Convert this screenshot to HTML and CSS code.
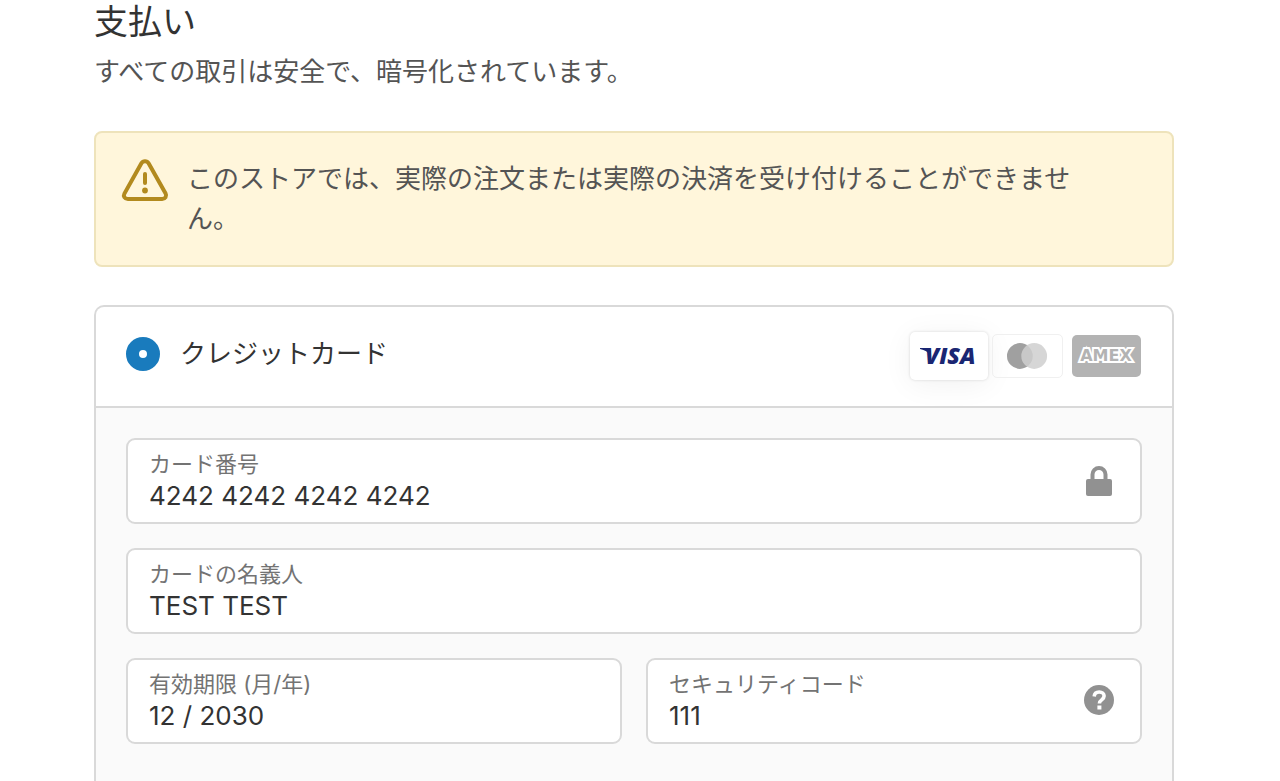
FILE: index.html
```html
<!DOCTYPE html>
<html lang="ja">
<head>
  <meta charset="UTF-8" />
  <meta name="viewport" content="width=device-width, initial-scale=1.0" />
  <title>支払い</title>
  <link rel="stylesheet" href="styles.css">
</head>
<body>
  <main class="payment">
    <h1>支払い</h1>
    <p class="subtitle">すべての取引は安全で、暗号化されています。</p>

    <div class="notice">
      <svg class="notice-icon" viewBox="0 0 48 48" aria-hidden="true">
        <path d="M20.4 6.2a4.2 4.2 0 0 1 7.2 0l17 30.4c1.400 2.600-.3 5.400-3.400 5.400H6.800c-3.100 0-4.800-2.800-3.400-5.400z" fill="none" stroke="#b28a1e" stroke-width="4" stroke-linejoin="round" />
        <path d="M24 17v9" stroke="#b28a1e" stroke-width="4" stroke-linecap="round" />
        <circle cx="24" cy="33.500" r="2.900" fill="#b28a1e" />
      </svg>
      <p>このストアでは、実際の注文または実際の決済を受け付けることができません。</p>
    </div>

    <form class="card">
      <div class="card-header">
        <input type="radio" id="credit" name="method" checked />
        <label for="credit">クレジットカード</label>
        <div class="brands">
          <svg class="brand visa" viewBox="0 0 78 48" role="img" aria-label="Visa">
            <path d="M10 16h9l2 4-1 3c-2-3-5-5-10-6z" fill="#1a2672" />
            <text x="15" y="32">VISA</text>
          </svg>
          <svg class="brand mastercard" viewBox="0 0 70 44" role="img" aria-label="Mastercard">
            <circle cx="27" cy="22" r="13.500" fill="#a0a0a0" />
            <circle cx="42" cy="22" r="13.500" fill="#cfcfcf" fill-opacity=".85" />
          </svg>
          <svg class="brand amex" viewBox="0 0 69 42" role="img" aria-label="Amex">
            <text x="34" y="26" text-anchor="middle">AMEX</text>
          </svg>
        </div>
      </div>

      <div class="card-body">
        <div class="field">
          <div class="field-text">
            <label for="number">カード番号</label>
            <input type="text" id="number" value="4242 4242 4242 4242" />
          </div>
          <svg class="field-icon" viewBox="0 0 32 32" aria-hidden="true">
            <path d="M9.500 16V10.500a6.500 6.500 0 0 1 13 0V16" fill="none" stroke="#919191" stroke-width="4" />
            <rect x="3" y="15" width="26" height="17" rx="2" fill="#919191" />
          </svg>
        </div>

        <div class="field">
          <div class="field-text">
            <label for="holder">カードの名義人</label>
            <input type="text" id="holder" value="TEST TEST" />
          </div>
        </div>

        <div class="row">
          <div class="field">
            <div class="field-text">
              <label for="expiry">有効期限 (月/年)</label>
              <input type="text" id="expiry" value="12 / 2030" />
            </div>
          </div>
          <div class="field">
            <div class="field-text">
              <label for="cvv">セキュリティコード</label>
              <input type="text" id="cvv" value="111" />
            </div>
            <svg class="field-icon" viewBox="0 0 32 32" aria-hidden="true">
              <circle cx="16" cy="16" r="15" fill="#919191" />
              <path d="M11.200 12.500c.2-2.800 2.200-4.500 5-4.500 2.900 0 4.900 1.600 4.900 4.100 0 3.900-4.700 3.600-4.700 7.300" fill="none" stroke="#fff" stroke-width="3.600" />
              <rect x="14.400" y="21.500" width="4" height="4" fill="#fff" />
            </svg>
          </div>
        </div>
      </div>
    </form>
  </main>
</body>
</html>
```

FILE: styles.css
```css
* {
  box-sizing: border-box;
}
body {
  margin: 0;
  background: #fff;
  color: #333;
  font-family: Inter, "Noto Sans CJK JP", sans-serif;
  font-size: 26px;
  line-height: 40px;
}
h1, p {
  margin: 0;
}
.payment {
  display: flex;
  flex-direction: column;
  min-height: 100vh;
  padding: 0 106px 0 94px;
}
h1 {
  font-size: 34px;
  font-weight: 400;
  line-height: 44px;
}
.subtitle {
  margin-top: 8px;
  color: #545454;
}
.notice {
  display: flex;
  gap: 18px;
  margin: 39px 0 38px;
  padding: 26px 52px 26px 25px;
  background: #fff6db;
  border: 2px solid #eee3bb;
  border-radius: 8px;
  color: #545454;
}
.notice-icon {
  flex: none;
  width: 48px;
  height: 48px;
  margin-top: -2px;
}
.card {
  display: flex;
  flex-direction: column;
  flex: 1;
  border: 2px solid #d9d9d9;
  border-bottom: 0;
  border-radius: 10px 10px 0 0;
}
.card-header {
  display: flex;
  align-items: center;
  height: 99px;
  padding: 0 31px 5px 30px;
}
.card-header input {
  appearance: none;
  width: 34px;
  height: 34px;
  margin: 0 20px 0 0;
  background: #fff;
  border: 13px solid #197bbd;
  border-radius: 50%;
}
.brands {
  display: flex;
  align-items: center;
  gap: 4px;
  margin: 4px 0 0 auto;
}
.brand {
  border-radius: 5px;
}
.visa {
  width: 78px;
  height: 48px;
  background: #fff;
  box-shadow: 0 0 3px rgba(0, 0, 0, 0.15), 0 4px 30px rgba(0, 0, 0, 0.06);
}
.visa text {
  font: italic 800 23px "Open Sans", sans-serif;
  fill: #1a2672;
}
.mastercard {
  width: 71px;
  height: 44px;
  border: 1px solid #f0f0f0;
}
.amex {
  width: 69px;
  height: 42px;
  margin-left: 5px;
  background: #b3b3b3;
}
.amex text {
  font: 700 16px "DejaVu Sans", sans-serif;
  fill: #b3b3b3;
  stroke: #fff;
  stroke-width: 4px;
  paint-order: stroke;
}
.card-body {
  display: flex;
  flex-direction: column;
  flex: 1;
  gap: 24px;
  padding: 30px;
  background: #fafafa;
  border-top: 2px solid #d9d9d9;
}
.row {
  display: grid;
  grid-template-columns: 1fr 1fr;
  gap: 24px;
}
.field {
  display: flex;
  align-items: center;
  padding: 8px 25px 10px 21px;
  background: #fff;
  border: 2px solid #d9d9d9;
  border-radius: 9px;
}
.field-text {
  flex: 1;
  min-width: 0;
}
.field label {
  display: block;
  color: #737373;
  font-size: 22px;
  line-height: 32px;
}
.field input {
  display: block;
  width: 100%;
  height: 32px;
  padding: 0;
  background: none;
  border: 0;
  outline: 0;
  color: #333;
  font: inherit;
}
.field-icon {
  flex: none;
  width: 32px;
  height: 32px;
}
```
